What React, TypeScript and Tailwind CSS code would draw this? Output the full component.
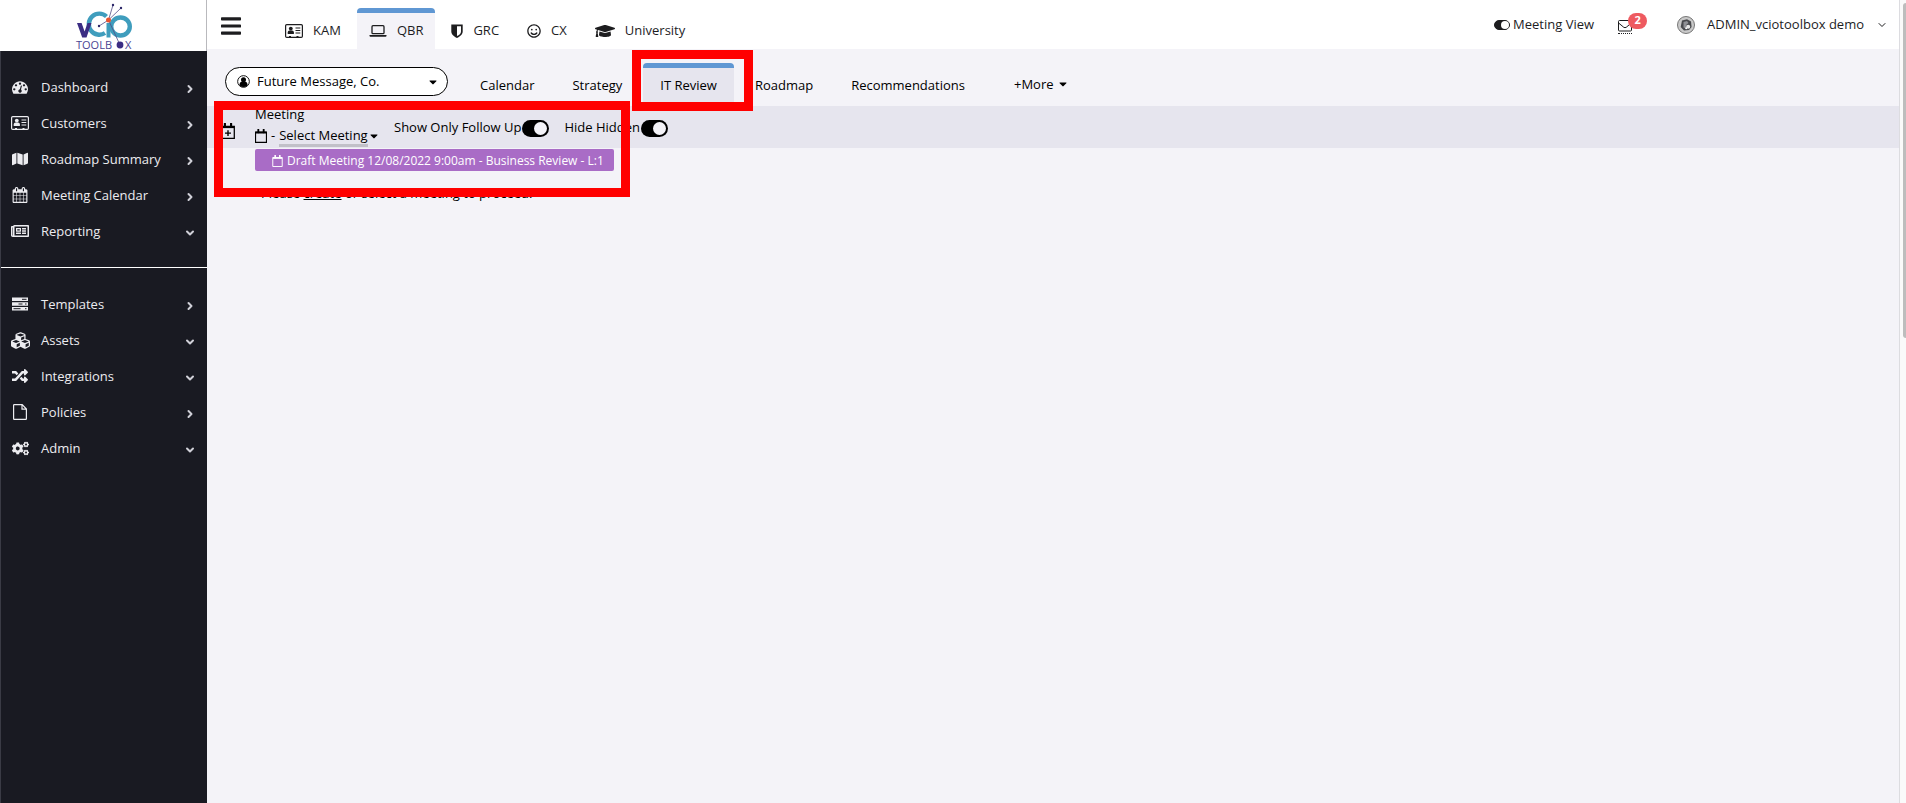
import React from 'react';
import {
    FaBars,
    FaCaretDown,
    FaCogs,
    FaCubes,
    FaGraduationCap,
    FaMap,
    FaRandom,
    FaRegNewspaper,
    FaRegSmile,
} from 'react-icons/fa';
import { ChevronDown, ChevronRight } from 'lucide-react';

type IconProps = { className?: string };

const GaugeIcon: React.FC<IconProps> = ({ className }) => (
    <svg viewBox="0 0 1792 1792" fill="currentColor" className={className}>
        <path d="M384 1152q0-53-37.5-90.5t-90.5-37.5-90.5 37.5-37.5 90.5 37.5 90.5 90.5 37.5 90.5-37.5 37.5-90.5zm192-448q0-53-37.5-90.5t-90.5-37.5-90.5 37.5-37.5 90.5 37.5 90.5 90.5 37.5 90.5-37.5 37.5-90.5zm428 481l101-382q6-26-7.500-48.500t-38.500-29.500-48 6.500-30 39.500l-101 382q-60 5-107 43.500t-63 98.500q-20 77 20 146t117 89 146-20 89-117q16-60-6-117t-72-91zm660-33q0-53-37.500-90.500t-90.500-37.500-90.500 37.500-37.500 90.500 37.500 90.500 90.500 37.500 90.500-37.500 37.500-90.500zm-640-640q0-53-37.500-90.500t-90.500-37.500-90.500 37.500-37.500 90.500 37.500 90.500 90.500 37.500 90.500-37.500 37.500-90.500zm448 192q0-53-37.500-90.500t-90.500-37.500-90.500 37.500-37.500 90.500 37.500 90.500 90.500 37.500 90.500-37.500 37.500-90.500zm320 448q0 261-141 483-19 29-54 29h-1402q-35 0-54-29-141-221-141-483 0-182 71-348t191-286 286-191 348-71 348 71 286 191 191 286 71 348z" />
    </svg>
);

const CalendarGridIcon: React.FC<IconProps> = ({ className }) => (
    <svg viewBox="0 0 1792 1792" fill="currentColor" className={className}>
        <path d="M192 1664h288v-288h-288v288zm352 0h320v-288h-320v288zm-352-352h288v-320h-288v320zm352 0h320v-320h-320v320zm-352-384h288v-288h-288v288zm736 736h320v-288h-320v288zm-384-736h320v-288h-320v288zm768 736h288v-288h-288v288zm-384-352h320v-320h-320v320zm-352-864v-288q0-13-9.500-22.500t-22.500-9.500h-64q-13 0-22.500 9.500t-9.500 22.500v288q0 13 9.500 22.500t22.500 9.500h64q13 0 22.500-9.500t9.500-22.500zm736 864h288v-320h-288v320zm-384-384h320v-288h-320v288zm384 0h288v-288h-288v288zm32-480v-288q0-13-9.500-22.500t-22.500-9.500h-64q-13 0-22.500 9.500t-9.500 22.500v288q0 13 9.500 22.500t22.500 9.500h64q13 0 22.500-9.500t9.500-22.500zm384-64v1280q0 52-38 90t-90 38h-1408q-52 0-90-38t-38-90v-1280q0-52 38-90t90-38h128v-96q0-66 47-113t113-47h64q66 0 113 47t47 113v96h384v-96q0-66 47-113t113-47h64q66 0 113 47t47 113v96h128q52 0 90 38t38 90z" />
    </svg>
);

const IdCardIcon: React.FC<IconProps> = ({ className }) => (
    <svg viewBox="0 0 18 14" className={className}>
        <rect x="0.6" y="0.6" width="16.800" height="12.800" rx="1.200" fill="none" stroke="currentColor" strokeWidth="1.200" />
        <circle cx="5.800" cy="4.600" r="1.900" fill="currentColor" />
        <path d="M2.700 10V8.600C2.700 7.200 3.600 6.400 4.500 6.400h2.600c.9 0 1.800.8 1.800 2.200V10z" fill="currentColor" />
        <path d="M10.500 4h4.800M10.500 6.500h4.800M10.500 9h4.800M4 12.700h2M11.500 12.700h2" stroke="currentColor" strokeWidth="1.200" />
    </svg>
);

const ServerIcon: React.FC<IconProps> = ({ className }) => (
    <svg viewBox="0 0 16 14" className={className}>
        <path d="M0 .5h16v3.600H0zM0 5.200h16v3.600H0zM0 9.900h16v3.600H0z" fill="currentColor" />
        <path d="M10 2.300h4.500M6.500 7h4M1.500 11.700h7" stroke="#191a22" strokeWidth="1" />
        <path d="M13 7h1.500M13 11.700h1.500" stroke="#191a22" strokeWidth="1" />
    </svg>
);

const FileIcon: React.FC<IconProps> = ({ className }) => (
    <svg viewBox="0 0 14 16" className={className}>
        <path d="M.6 1.200c0-.3.300-.6.600-.6h8L13.400 5v9.800c0 .3-.3.600-.6.600H1.200c-.3 0-.6-.3-.6-.6zM9 .6v4.600h4.400" fill="none" stroke="currentColor" strokeWidth="1.200" />
    </svg>
);

const LaptopIcon: React.FC<IconProps> = ({ className }) => (
    <svg viewBox="0 0 18 12" className={className}>
        <rect x="3" y="0.700" width="12" height="8" rx="1" fill="none" stroke="currentColor" strokeWidth="1.300" />
        <path d="M0.500 10h17v.8c0 .6-.6 1-1.300 1H1.800c-.7 0-1.300-.4-1.300-1z" fill="currentColor" />
    </svg>
);

const ShieldIcon: React.FC<IconProps> = ({ className }) => (
    <svg viewBox="0 0 12 14" className={className}>
        <path d="M.3.500h11.400v7c0 3-2.700 5.100-5.700 6.500C3 12.600.3 10.500.3 7.500zM6 2.200v9.900c2.300-1.200 4-2.700 4-4.700V2.200z" fill="currentColor" fillRule="evenodd" />
    </svg>
);

// calendar outline with two rings, optionally with a plus inside
const CalendarIcon: React.FC<IconProps & { plus?: boolean }> = ({ className, plus }) => (
    <svg viewBox="0 0 13 15" className={className}>
        <path d="M.6 3.200h11.800v11.200H.6z" fill="none" stroke="currentColor" strokeWidth="1.200" />
        <path d="M.6 2.800h11.800v2H.6z" fill="currentColor" />
        <path d="M3.600.5v3M9.400.5v3" stroke="currentColor" strokeWidth="2" strokeLinecap="round" />
        {plus && <path d="M6.500 6.700v5.600M3.700 9.500h5.600" stroke="currentColor" strokeWidth="1.300" />}
    </svg>
);

const EnvelopeIcon: React.FC<IconProps> = ({ className }) => (
    <svg viewBox="0 0 14 12" className={className}>
        <rect x="0.5" y="0.5" width="13" height="10.500" rx="1" fill="none" stroke="currentColor" />
        <path d="m.8 3.200 5 4.100c.7.500 1.700.5 2.400 0l5-4.100" fill="none" stroke="currentColor" />
    </svg>
);

const UserCircleIcon: React.FC<IconProps> = ({ className }) => (
    <svg viewBox="0 0 14 14" className={className}>
        <circle cx="7" cy="7" r="6.300" fill="none" stroke="currentColor" strokeWidth="1" />
        <circle cx="7" cy="5.200" r="2.700" fill="currentColor" />
        <path d="M2.600 11c.1-2.300 1-3.500 2.400-3.600h4c1.400.1 2.300 1.300 2.400 3.600A6 6 0 0 1 7 13a6 6 0 0 1-4.400-2z" fill="currentColor" />
    </svg>
);

const Avatar: React.FC<IconProps> = ({ className }) => (
    <svg viewBox="0 0 18 18" className={className}>
        <circle cx="9" cy="9" r="8.500" fill="#c9c9c9" stroke="#777" strokeWidth="1" />
        <path d="M5 4.500 10 3.200l4 2.300.6 5.500-2.600 3-5 .6L3.700 11z" fill="#48494d" />
        <path d="M6.500 6 10 5l1.500 2-2 1.500-.5 4-2.500-1z" fill="#8f9095" />
        <circle cx="11.200" cy="10.800" r="2" fill="#e8e8e8" />
        <circle cx="9.200" cy="12.300" r="1" fill="#fff" />
    </svg>
);

const Logo: React.FC = () => (
    <svg viewBox="0 0 66 48" className="h-12 w-[66px]" role="img" aria-label="vCIO Toolbox">
        <path d="M36.500 13.500A10.500 10.500 0 1 0 35 30" fill="none" stroke="#3f9dbd" strokeWidth="4.400" />
        <path d="M7 20h4.600l3 8.500L17.500 20h4L16.500 34.500h-4.300z" fill="#3b2d83" />
        <path d="M38.500 20v14.500" stroke="#3f9dbd" strokeWidth="4" />
        <ellipse cx="50.500" cy="23.500" rx="9.300" ry="9" fill="none" stroke="#3f9dbd" strokeWidth="4.400" />
        <path d="m38.500 17 4.500-15M38.500 17 51 5M38.500 17 29 23M38.500 17l11.500 25" stroke="#524c86" strokeWidth="0.800" />
        <circle cx="43" cy="2" r="1.200" fill="#2c2668" />
        <circle cx="51" cy="5" r="1.200" fill="#2c2668" />
        <circle cx="29" cy="23" r="1.200" fill="#2c2668" />
        <circle cx="38.500" cy="17" r="2.500" fill="#e8532f" />
        <text x="6" y="46" fontSize="11" fill="#4a4592">
            TOOLB
        </text>
        <circle cx="50" cy="42" r="3.400" fill="#3b2d83" />
        <text x="55" y="46" fontSize="11" fill="#4a4592">
            X
        </text>
    </svg>
);

type NavItem = { label: string; icon: React.ReactNode; open?: boolean };

const mainNav: NavItem[] = [
    { label: 'Dashboard', icon: <GaugeIcon className="size-4" /> },
    { label: 'Customers', icon: <IdCardIcon className="h-3.5 w-[18px]" /> },
    { label: 'Roadmap Summary', icon: <FaMap className="size-4" /> },
    { label: 'Meeting Calendar', icon: <CalendarGridIcon className="size-4" /> },
    { label: 'Reporting', icon: <FaRegNewspaper className="size-[18px]" />, open: true },
];

const setupNav: NavItem[] = [
    { label: 'Templates', icon: <ServerIcon className="h-3.5 w-4" /> },
    { label: 'Assets', icon: <FaCubes className="size-[19px]" />, open: true },
    { label: 'Integrations', icon: <FaRandom className="size-4" />, open: true },
    { label: 'Policies', icon: <FileIcon className="h-4 w-3.5" /> },
    { label: 'Admin', icon: <FaCogs className="size-[17px]" />, open: true },
];

const NavList: React.FC<{ items: NavItem[] }> = ({ items }) => (
    <ul>
        {items.map(({ label, icon, open }) => (
            <li key={label}>
                <a href="#" className="flex h-9 items-center pr-[11px] pl-[9px] text-[13px] font-medium text-[#ececf0]">
                    <span className="flex w-5 justify-center pb-0.5">{icon}</span>
                    <span className="ml-[11px] flex-1">{label}</span>
                    {open ? (
                        <ChevronDown className="mt-0.5 size-3 text-[#d0d0d8]" strokeWidth={4} />
                    ) : (
                        <ChevronRight className="mt-px size-3 text-[#d0d0d8]" strokeWidth={4} />
                    )}
                </a>
            </li>
        ))}
    </ul>
);

const Sidebar: React.FC = () => (
    <aside className="flex w-[207px] shrink-0 flex-col bg-[#191a22]">
        <div className="flex h-[51px] justify-center border-r border-[#b9b9bd] bg-white pt-[3px]">
            <Logo />
        </div>
        <nav className="flex-1 border-l border-[#3a3b45] pt-[19px]">
            <NavList items={mainNav} />
            <hr className="mt-[17px] mb-[19px] border-white" />
            <NavList items={setupNav} />
        </nav>
    </aside>
);

const modules = [
    { label: 'KAM', icon: <IdCardIcon className="h-3.5 w-[18px]" /> },
    { label: 'QBR', icon: <LaptopIcon className="h-3 w-[18px]" />, active: true },
    { label: 'GRC', icon: <ShieldIcon className="h-3.5 w-3" /> },
    { label: 'CX', icon: <FaRegSmile className="size-3.5" /> },
    { label: 'University', icon: <FaGraduationCap className="h-4 w-5" /> },
];

const TopBar: React.FC = () => (
    <header className="flex h-[49px] items-start bg-white text-[#1d1d1f]">
        <button type="button" aria-label="Toggle menu" className="mt-3.5 ml-3.5">
            <FaBars className="h-6 w-5" />
        </button>
        <nav className="ml-8 flex gap-1 pt-2">
            {modules.map(({ label, icon, active }) => (
                <a
                    key={label}
                    href="#"
                    className={`flex h-[41px] items-center gap-2.5 px-3 ${
                        active ? 'rounded-t border-t-[5px] border-[#5f97d3] bg-[#f4f3f8]' : 'pt-1'
                    }`}
                >
                    {icon}
                    {label}
                </a>
            ))}
        </nav>
        <div className="ml-auto flex h-[49px] items-center pr-[11px]">
            <label className="flex items-center gap-[3px]">
                <input
                    type="checkbox"
                    defaultChecked
                    className="flex h-2.5 w-4 appearance-none justify-end rounded-full border border-[#1d1d1f] bg-[#1d1d1f] before:size-2 before:rounded-full before:bg-white before:content-['']"
                />
                Meeting View
            </label>
            <a href="#" aria-label="Messages" className="relative mt-1 ml-6 border-b border-dotted border-[#1d1d1f] pb-px">
                <EnvelopeIcon className="h-3 w-3.5" />
                <span className="absolute -top-[7px] left-2.5 flex h-4 w-[19px] items-center justify-center rounded-full bg-[#ee5a60] text-[11px] font-bold text-white">
                    2
                </span>
            </a>
            <button type="button" className="ml-[45px] flex items-center">
                <Avatar className="size-[18px]" />
                <span className="ml-3">ADMIN_vciotoolbox demo</span>
                <ChevronDown className="ml-3 size-3" />
            </button>
        </div>
    </header>
);

const pages = ['Calendar', 'Strategy', 'IT Review', 'Roadmap', 'Recommendations'];

const CustomerBar: React.FC = () => (
    <div className="flex h-[57px] items-end pl-[18px]">
        <div className="relative mb-2.5 flex h-[29px] w-[223px] items-center rounded-full border border-black bg-white pl-[11px]">
            <UserCircleIcon className="size-[13px]" />
            <select aria-label="Customer" className="h-full flex-1 appearance-none bg-transparent pl-[7px] outline-none">
                <option>Future Message, Co.</option>
            </select>
            <FaCaretDown className="pointer-events-none absolute right-2 size-3" />
        </div>
        <nav className="ml-[15px] flex gap-1">
            {pages.map((page) => (
                <a
                    key={page}
                    href="#"
                    className={`flex h-[43px] items-center px-[17px] ${
                        page === 'IT Review' ? 'rounded-t border-t-[5px] border-[#5f97d3] bg-[#e6e5ee] pb-0.5' : 'pt-[3px]'
                    }`}
                >
                    {page}
                </a>
            ))}
        </nav>
        <button type="button" className="mb-3 ml-8 flex items-center gap-[3px]">
            +More
            <FaCaretDown className="size-3" />
        </button>
    </div>
);

const Switch: React.FC<{ label: string }> = ({ label }) => (
    <label className="flex items-center gap-px">
        {label}
        <input
            type="checkbox"
            defaultChecked
            className="flex h-[17px] w-[27px] appearance-none items-center justify-end rounded-full bg-black pr-0.5 before:size-[13px] before:rounded-full before:bg-[#f4f3f8] before:content-['']"
        />
    </label>
);

const MeetingBar: React.FC = () => (
    <div className="flex h-[42px] bg-[#e6e5ee] pl-[14px]">
        <button type="button" aria-label="Create meeting" className="mt-2">
            <CalendarIcon plus className="h-4 w-3.5" />
        </button>
        <div className="relative ml-5 w-[139px]">
            <div className="h-5 leading-4">Meeting</div>
            <button type="button" className="flex items-start leading-[18px]">
                <CalendarIcon className="mt-[3px] h-3.5 w-3" />
                <span className="mx-1">-</span>
                <span className="border-b-[3px] border-[#c1c0c8]">Select Meeting</span>
                <FaCaretDown className="mt-1 size-3" />
            </button>
            <ul className="absolute top-[43px] left-0">
                <li>
                    <a
                        href="#"
                        className="flex h-[22px] items-center gap-1 rounded-xs bg-[#a96cc6] pt-px pr-2.5 pl-[17px] text-xs whitespace-nowrap text-white"
                    >
                        <CalendarIcon className="h-3 w-[11px]" />
                        Draft Meeting 12/08/2022 9:00am - Business Review - L:1
                    </a>
                </li>
            </ul>
        </div>
        <div className="flex h-[42px] items-center gap-[15px] pt-0.5">
            <Switch label="Show Only Follow Up" />
            <Switch label="Hide Hidden" />
        </div>
    </div>
);

const App: React.FC = () => {
    return (
        <div className="flex min-h-screen bg-[#f4f3f8] font-['Open_Sans','Noto_Sans',sans-serif] text-[13px] text-black">
            <Sidebar />
            <main className="relative min-w-0 flex-1">
                <TopBar />
                <CustomerBar />
                <MeetingBar />
                <p className="mt-9 pl-[54px]">
                    Please{' '}
                    <a href="#" className="underline decoration-1">
                        create
                    </a>{' '}
                    or select a meeting to proceed.
                </p>
                {/* highlight frames over the tab and the meeting menu */}
                <div className="pointer-events-none absolute top-[50px] left-[425px] h-[61px] w-[121px] border-[9px] border-[#ff0000]" />
                <div className="pointer-events-none absolute top-[101px] left-[7px] h-24 w-[416px] border-[9px] border-[#ff0000]" />
            </main>
            <div className="flex w-[7px] justify-end border-l border-[#dcdce0] bg-[#fafafa] pt-[3px]">
                <div className="h-[335px] w-[3px] rounded-l bg-[#bdbdbd]" />
            </div>
        </div>
    );
};

export default App;
